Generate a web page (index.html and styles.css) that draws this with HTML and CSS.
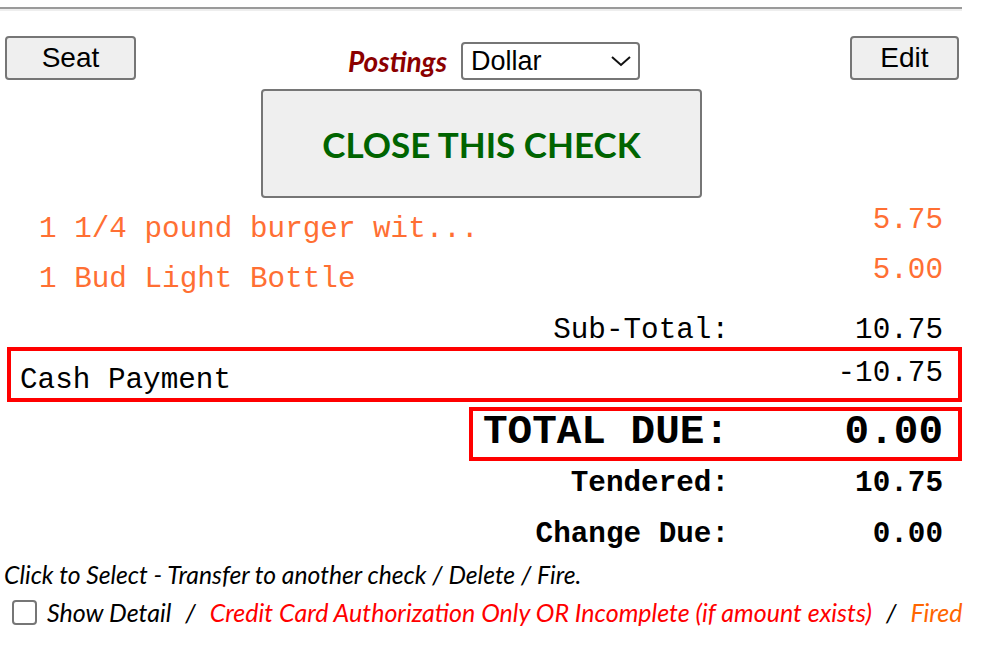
FILE: index.html
```html
<!DOCTYPE html>
<html lang="en">

<head>
  <meta charset="UTF-8">
  <meta name="viewport" content="width=device-width, initial-scale=1.0">
  <title>Check</title>
  <link rel="stylesheet" href="styles.css">
</head>

<body>
  <div class="page">
    <div class="rule"></div>

    <div class="top-row">
      <button class="btn btn-seat">Seat</button>
      <div class="postings">
        <span class="postings-label">Postings</span>
        <div class="select">
          <span>Dollar</span>
          <svg width="22" height="12" viewBox="0 0 22 12" fill="none" stroke="#111" stroke-width="2">
            <path d="M2 2l9 8 9-8"></path>
          </svg>
        </div>
      </div>
      <button class="btn btn-edit">Edit</button>
    </div>

    <div class="close-wrap">
      <button class="close-btn">CLOSE THIS CHECK</button>
    </div>

    <div class="receipt">
      <div class="item">
        <span class="item-name">1 1/4 pound burger wit...</span>
        <span class="item-price">5.75</span>
      </div>
      <div class="item">
        <span class="item-name">1 Bud Light Bottle</span>
        <span class="item-price">5.00</span>
      </div>

      <div class="sum-row sub-total">
        <span class="sum-label">Sub-Total:</span>
        <span class="sum-value">10.75</span>
      </div>

      <div class="payment">
        <span class="payment-name">Cash Payment</span>
        <span class="payment-value">-10.75</span>
      </div>

      <div class="total-due">
        <span class="sum-label">TOTAL DUE:</span>
        <span class="sum-value">0.00</span>
      </div>

      <div class="sum-row bold tendered">
        <span class="sum-label">Tendered:</span>
        <span class="sum-value">10.75</span>
      </div>
      <div class="sum-row bold change">
        <span class="sum-label">Change Due:</span>
        <span class="sum-value">0.00</span>
      </div>
    </div>

    <div class="legend">
      <p class="hint">Click to Select - Transfer to another check / Delete / Fire.</p>
      <div class="legend-row">
        <span class="checkbox"></span>
        <span>Show Detail</span>
        <span class="sep">/</span>
        <span class="red">Credit Card Authorization Only OR Incomplete (if amount exists)</span>
        <span class="sep">/</span>
        <span class="orange">Fired</span>
      </div>
    </div>
  </div>
</body>

</html>
```

FILE: styles.css
```css
* {
  margin: 0;
  padding: 0;
  box-sizing: border-box;
}

body {
  background-color: #fff;
  color: #000;
  font-family: 'Liberation Sans', Arial, sans-serif;
}

.page {
  width: 963px;
  padding-top: 7px;
}

.rule {
  width: 962px;
  height: 4px;
  border-top: 2px solid #9a9a9a;
  border-bottom: 2px solid #eeeeee;
}

/* top controls */
.top-row {
  display: flex;
  justify-content: space-between;
  align-items: flex-end;
  padding: 0 4px 0 5px;
  margin-top: 25px;
}

.btn {
  height: 44px;
  background-color: #efefef;
  border: 2px solid #767676;
  border-radius: 4px;
  font-family: 'Liberation Sans', Arial, sans-serif;
  font-size: 28px;
  color: #000;
}

.btn-seat {
  width: 131px;
}

.btn-edit {
  width: 109px;
}

.postings {
  display: flex;
  align-items: center;
  gap: 14px;
  margin-left: 2px;
}

.postings-label {
  font-family: Lato, sans-serif;
  font-weight: 700;
  font-style: italic;
  font-size: 28px;
  color: #8b0000;
}

.select {
  width: 179px;
  height: 38px;
  border: 2px solid #767676;
  border-radius: 4px;
  background-color: #fff;
  display: flex;
  align-items: center;
  justify-content: space-between;
  padding: 0 6px 0 8px;
  font-size: 27px;
}

.close-wrap {
  display: flex;
  justify-content: center;
  margin-top: 9px;
}

.close-btn {
  width: 441px;
  height: 109px;
  background-color: #efefef;
  border: 2px solid #767676;
  border-radius: 4px;
  font-family: Lato, sans-serif;
  font-weight: 700;
  font-size: 35px;
  color: #006400;
}

/* receipt */
.receipt {
  font-family: 'Liberation Mono', 'Courier New', monospace;
  font-size: 29.3px;
  line-height: 34px;
  margin-top: 6px;
  white-space: nowrap;
}

.item {
  display: flex;
  justify-content: space-between;
  align-items: flex-start;
  height: 50px;
  padding: 0 20px 0 39px;
  color: #ff6f33;
}

.item-name {
  margin-top: 9px;
}

.sum-row,
.total-due {
  display: grid;
  grid-template-columns: 1fr 214px;
  text-align: right;
}

.sub-total {
  margin-top: 10px;
  height: 33px;
  padding-right: 20px;
}

.payment {
  display: flex;
  justify-content: space-between;
  align-items: flex-start;
  height: 55px;
  margin-left: 7px;
  width: 955px;
  border: 4px solid #ff0000;
  padding: 6px 15px 0 9px;
}

.payment-name {
  margin-top: 7px;
}

.total-due {
  width: 493px;
  height: 54px;
  margin: 5px 0 0 469px;
  border: 4px solid #ff0000;
  padding: 1px 15px 0 0;
  font-size: 41px;
  line-height: 40px;
  font-weight: 700;
}

.bold {
  font-weight: 700;
}

.tendered {
  margin-top: 6px;
  height: 51px;
  padding-right: 20px;
}

.change {
  height: 34px;
  padding-right: 20px;
}

/* legend */
.legend {
  font-family: Lato, sans-serif;
  font-style: italic;
  padding-left: 4px;
  margin-top: 8px;
}

.hint {
  font-size: 24.7px;
  line-height: 30px;
}

.legend-row {
  display: flex;
  align-items: center;
  width: max-content;
  white-space: nowrap;
  margin-top: 7px;
  padding-left: 8px;
  font-size: 25px;
}

.legend-row > span {
  flex-shrink: 0;
}

.checkbox {
  width: 25px;
  height: 25px;
  border: 2px solid #767676;
  border-radius: 4px;
  margin-right: 10px;
}

.sep {
  margin: 0 14px;
}

.red {
  color: #ff0000;
}

.orange {
  color: #ff6600;
}
```
